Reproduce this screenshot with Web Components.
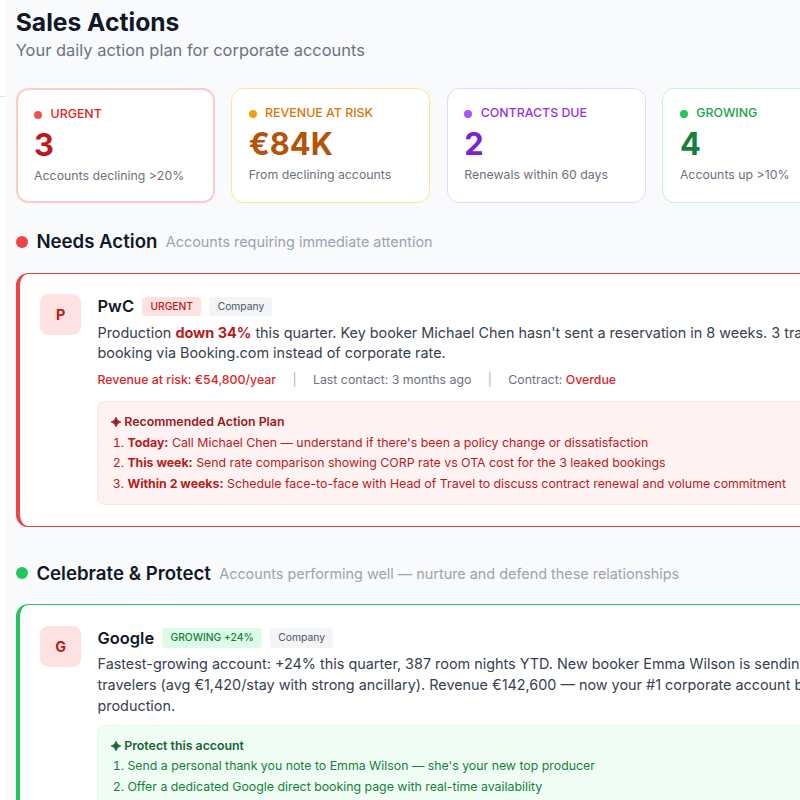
<!DOCTYPE html>
<html lang="en">
<head>
<meta charset="utf-8">
<title>Sales Actions</title>
<style>
html,body{margin:0;height:800px;overflow:hidden}
body{width:800px;background:#f9fafb;font-family:Inter,"Liberation Sans",sans-serif;color:#111827}
</style>
</head>
<body>
<sales-page>
  <page-header heading="Sales Actions">Your daily action plan for corporate accounts</page-header>
  <stat-grid>
    <stat-card label="URGENT" value="3" style="--line:#fecaca;--bw:2px;--dot:#f05252;--label:#dc2626;--value:#b91c1c">Accounts declining &gt;20%</stat-card>
    <stat-card label="REVENUE AT RISK" value="€84K" style="--line:#fde68a;--dot:#f59e0b;--label:#d97706;--value:#b45309">From declining accounts</stat-card>
    <stat-card label="CONTRACTS DUE" value="2" style="--line:#e9d5ff;--dot:#a855f7;--label:#9333ea;--value:#7e22ce">Renewals within 60 days</stat-card>
    <stat-card label="GROWING" value="4" style="--line:#bbf7d0;--dot:#22c55e;--label:#16a34a;--value:#15803d">Accounts up &gt;10%</stat-card>
  </stat-grid>
  <action-section heading="Needs Action" note="Accounts requiring immediate attention" style="--accent:#ef4444">
    <account-card initial="P" name="PwC">
      <status-chip slot="chips" style="--chip-bg:#fee2e2;--chip-fg:#b91c1c;--chip-weight:500">URGENT</status-chip>
      <status-chip slot="chips">Company</status-chip>
      <span>Production <b style="color:#b91c1c">down 34%</b> this quarter. Key booker Michael Chen hasn't sent a reservation in 8 weeks. 3 travelers<br>booking via Booking.com instead of corporate rate.</span>
      <meta-row slot="meta"><span style="color:#dc2626;font-weight:500">Revenue at risk: €54,800/year</span><i>|</i><span>Last contact: 3 months ago</span><i>|</i><span>Contract: <span style="color:#dc2626;font-weight:500">Overdue</span></span></meta-row>
      <action-plan slot="plan" heading="Recommended Action Plan" style="--bg:#fef2f2;--line:#fee2e2;--head:#991b1b;--fg:#b91c1c">
        <plan-step n="1."><b>Today:</b> Call Michael Chen — understand if there's been a policy change or dissatisfaction</plan-step>
        <plan-step n="2."><b>This week:</b> Send rate comparison showing CORP rate vs OTA cost for the 3 leaked bookings</plan-step>
        <plan-step n="3."><b>Within 2 weeks:</b> Schedule face-to-face with Head of Travel to discuss contract renewal and volume commitment</plan-step>
      </action-plan>
    </account-card>
  </action-section>
  <action-section heading="Celebrate &amp; Protect" note="Accounts performing well — nurture and defend these relationships" style="--accent:#22c55e">
    <account-card initial="G" name="Google">
      <status-chip slot="chips" style="--chip-bg:#dcfce7;--chip-fg:#15803d;--chip-weight:500">GROWING +24%</status-chip>
      <status-chip slot="chips">Company</status-chip>
      <span>Fastest-growing account: +24% this quarter, 387 room nights YTD. New booker Emma Wilson is sending<br>travelers (avg €1,420/stay with strong ancillary). Revenue €142,600 — now your #1 corporate account by<br>production.</span>
      <action-plan slot="plan" heading="Protect this account" style="--bg:#f0fdf4;--line:#dcfce7;--head:#166534;--fg:#15803d;--plan-gap:8.4px">
        <plan-step n="1.">Send a personal thank you note to Emma Wilson — she's your new top producer</plan-step>
        <plan-step n="2.">Offer a dedicated Google direct booking page with real-time availability</plan-step>
      </action-plan>
    </account-card>
  </action-section>
</sales-page>
<script>
function define(name, render) {
  customElements.define(name, class extends HTMLElement {
    constructor() {
      super();
      this.attachShadow({ mode: 'open' });
    }
    connectedCallback() {
      const t = document.createElement('template');
      t.innerHTML = render(k => (this.getAttribute(k) || '').replace(/&/g, '&amp;'));
      this.shadowRoot.replaceChildren(t.content.cloneNode(true));
    }
  });
}

define('sales-page', () => `
<style>
:host{display:grid;grid-template-columns:6px 1040px;width:800px;height:800px;overflow:hidden}
aside{background:#fff;padding-top:95.5px;height:800px;box-sizing:border-box}
hr{margin:0;border:0;height:1.5px;background:#e5e7eb}
main{padding:5.6px 0 0 9.7px;display:flex;flex-direction:column;height:900px}
</style><aside><hr></aside><main><slot></slot></main>`);

define('page-header', a => `
<style>
:host{display:block;white-space:nowrap}
h1{margin:0;font-size:24.65px;line-height:32.8px;font-weight:700}
p{margin:0;font-size:16.45px;line-height:24.6px;color:#6b7280}
</style><h1>${a('heading')}</h1><p><slot></slot></p>`);

define('stat-grid', () => `
<style>
:host{display:grid;grid-template-columns:repeat(4,199.2px);gap:16.42px;margin-top:25px}
</style><slot></slot>`);

define('stat-card', a => `
<style>
:host{display:block;box-sizing:border-box;background:#fff;border:var(--bw,1px) solid var(--line);border-radius:12.3px;padding:16.42px;white-space:nowrap}
.label{display:flex;align-items:center;gap:8.2px;font-size:12.38px;line-height:16.42px;font-weight:500;color:var(--label)}
.dot{width:8.2px;height:8.2px;border-radius:50%;background:var(--dot)}
.value{margin-top:3.1px;font-size:30.8px;line-height:37px;font-weight:700;color:var(--value)}
.note{margin-top:5.1px;font-size:12.32px;line-height:16.42px;color:#6b7280}
</style><div class="label"><span class="dot"></span>${a('label')}</div><div class="value">${a('value')}</div><div class="note"><slot></slot></div>`);

define('action-section', a => `
<style>
:host{display:block;margin-top:24.6px}
:host(:last-of-type){margin-top:32.1px}
header{display:flex;align-items:center;gap:8.4px;height:28.75px;margin-bottom:16.5px;white-space:nowrap}
.dot{width:12.3px;height:12.3px;border-radius:50%;background:var(--accent)}
h2{margin:0;font-size:18.64px;line-height:28.75px;font-weight:600}
small{font-size:14.4px;color:#9ca3af}
</style><header><span class="dot"></span><h2>${a('heading')}</h2><small>${a('note')}</small></header><slot></slot>`);

define('account-card', a => `
<style>
:host{display:flex;gap:16.42px;width:984px;box-sizing:border-box;background:#fff;border:1px solid var(--accent);border-left-width:4px;border-radius:12.3px;padding:20.5px;padding-left:20.4px;white-space:nowrap}
.avatar{flex:none;width:41px;height:41px;border-radius:8.2px;background:#fee2e2;color:#b91c1c;display:flex;align-items:center;justify-content:center;font-size:14.37px;font-weight:700}
.body{flex:1;min-width:0}
.title{display:flex;align-items:center;gap:8.2px;height:24.6px}
h3{margin:0;font-size:16.45px;font-weight:600;line-height:24.6px}
.text{margin-top:4.1px;font-size:14.4px;line-height:20.6px;color:#374151}
</style><div class="avatar">${a('initial')}</div><div class="body"><div class="title"><h3>${a('name')}</h3><slot name="chips"></slot></div><div class="text"><slot></slot></div><slot name="meta"></slot><slot name="plan"></slot></div>`);

define('status-chip', () => `
<style>
:host{display:block;font-size:10.3px;line-height:15.4px;padding:2.05px 8.2px;border-radius:4.1px;background:var(--chip-bg,#f3f4f6);color:var(--chip-fg,#4b5563);font-weight:var(--chip-weight,400)}
</style><slot></slot>`);

define('meta-row', () => `
<style>
:host{display:flex;gap:16.4px;margin-top:8.1px;font-size:12.33px;line-height:16.42px;color:#6b7280}
::slotted(i){font-style:normal;color:#a9b4c8}
</style><slot></slot>`);

define('plan-step', a => `
<style>
:host{display:grid;grid-template-columns:14.6px auto;margin-top:4.1px;padding-left:2px}
.n{font-variant-numeric:tabular-nums}
</style><span class="n">${a('n')}</span><span><slot></slot></span>`);

define('action-plan', a => `
<style>
:host{display:block;box-sizing:border-box;margin-top:var(--plan-gap,12.2px);padding:12.3px;border:1px solid var(--line);border-radius:8.2px;background:var(--bg);font-size:12.34px;line-height:16.42px;color:var(--fg)}
.head{display:flex;align-items:center;gap:3.5px;font-weight:600;color:var(--head)}
svg{width:10px;height:10px}
</style><div class="head"><svg viewBox="0 0 10 10"><path d="M5 .2Q5.8 4.2 9.8 5Q5.8 5.8 5 9.8Q4.2 5.8 .2 5Q4.2 4.2 5 .2Z" fill="currentColor" stroke="currentColor" stroke-width=".9"/></svg>${a('heading')}</div><slot></slot>`);
</script>
</body>
</html>
